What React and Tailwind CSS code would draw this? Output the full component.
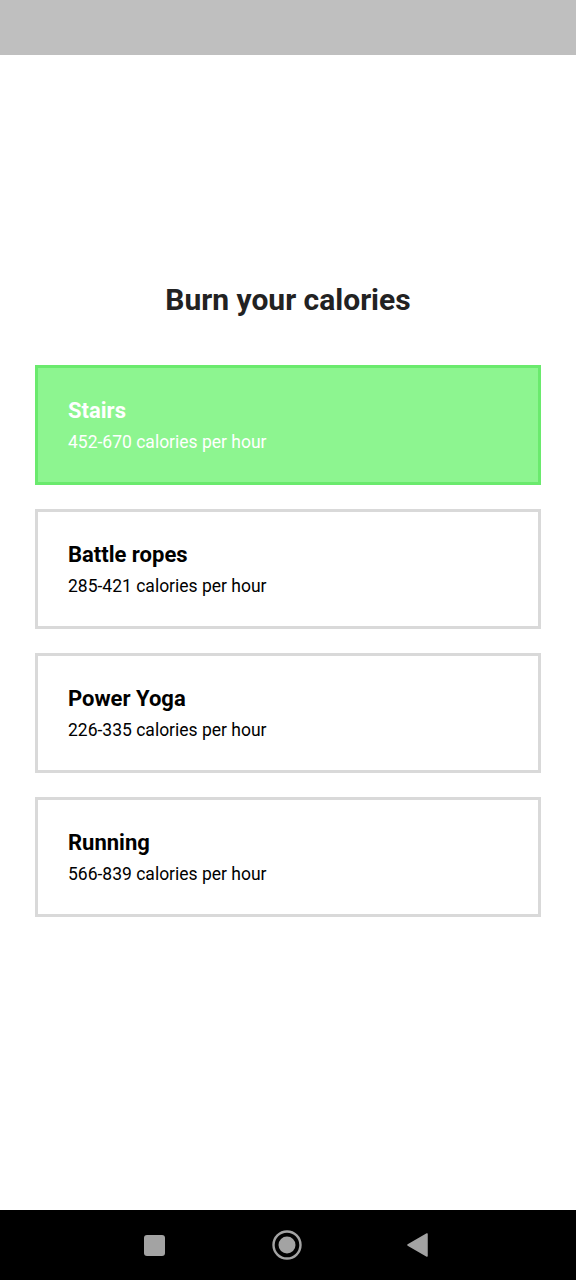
import React from "react";

const activities = [
  { name: "Stairs", range: "452-670", active: true },
  { name: "Battle ropes", range: "285-421" },
  { name: "Power Yoga", range: "226-335" },
  { name: "Running", range: "566-839" },
];

const App = () => {
  return (
    <div
      className="w-[576px] h-[1280px] flex flex-col bg-white"
      style={{ fontFamily: "Roboto, 'Noto Sans', sans-serif" }}
    >
      {/* status bar */}
      <div className="h-[55px] bg-[#bfbfbf]" />

      <div className="flex-1 flex flex-col">
        <h1 className="mt-[226px] text-center text-[30px] leading-[38px] font-bold text-[#222222]">
          Burn your calories
        </h1>

        <div className="mt-[46px] px-[35px] flex flex-col gap-[24px]">
          {activities.map((item) => (
            <div
              key={item.name}
              className={
                item.active
                  ? "h-[120px] border-[3px] border-[#6aea6d] bg-[#8df590] pl-[30px] flex flex-col justify-center text-white"
                  : "h-[120px] border-[3px] border-[#d9d9d9] bg-white pl-[30px] flex flex-col justify-center text-black"
              }
            >
              <div className="text-[22px] leading-[26px] font-bold">{item.name}</div>
              <div className="mt-[7px] text-[17.5px] leading-[22px]">
                {item.range} calories per hour
              </div>
            </div>
          ))}
        </div>
      </div>

      {/* nav bar */}
      <div className="h-[70px] bg-black flex items-center pl-[144px]">
        <div className="w-[21px] h-[21px] rounded-[3px] bg-[#a3a3a3]" />
        <svg className="ml-[107px]" width="30" height="30" viewBox="0 0 30 30">
          <circle cx="15" cy="15" r="13.5" fill="none" stroke="#a3a3a3" strokeWidth="2.4" />
          <circle cx="15" cy="15" r="8.5" fill="#a3a3a3" />
        </svg>
        <svg className="ml-[105px]" width="21" height="24" viewBox="0 0 21 24">
          <path d="M20 1 L20 23 L1 12 Z" fill="#a3a3a3" strokeLinejoin="round" stroke="#a3a3a3" strokeWidth="1.5" />
        </svg>
      </div>
    </div>
  );
};

export default App;
